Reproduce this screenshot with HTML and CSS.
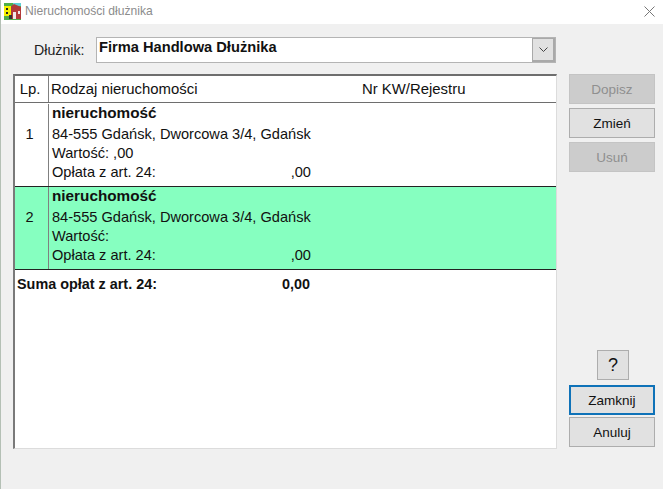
FILE: index.html
```html
<!DOCTYPE html>
<html lang="pl">
<head>
    <meta charset="UTF-8">
    <title>Nieruchomości dłużnika</title>
    <link rel="stylesheet" href="styles.css">
</head>
<body>

    <div class="window">
        <div class="title-bar">
            <svg class="app-icon" width="17" height="17" viewBox="0 0 17 17">
                <rect x="0" y="0" width="17" height="17" fill="#4fae4a"/>
                <rect x="9" y="0" width="8" height="3" fill="#5fd0d8"/>
                <path d="M5 5 L10 1 L17 4 L17 16 L5 16 Z" fill="#b23a3a"/>
                <rect x="9" y="9" width="3" height="7" fill="#f0e8e8"/>
                <rect x="14" y="8" width="2" height="3" fill="#f0e8e8"/>
                <rect x="0" y="3" width="7" height="10" fill="#f5f000"/>
                <rect x="2" y="5" width="2" height="2" fill="#222"/>
                <rect x="2" y="9" width="2" height="2" fill="#222"/>
                <rect x="5" y="12" width="3" height="4" fill="#333"/>
            </svg>
            <span class="title-text">Nieruchomości dłużnika</span>
            <svg class="close-icon" width="11" height="11" viewBox="0 0 11 11">
                <path d="M0.5 0.5 L10.5 10.5 M10.5 0.5 L0.5 10.5" stroke="#777" stroke-width="1" fill="none"/>
            </svg>
        </div>

        <div class="content">
            <div class="debtor-row">
                <label class="debtor-label">Dłużnik:</label>
                <div class="combo">
                    <span class="combo-value">Firma Handlowa Dłużnika</span>
                    <span class="combo-arrow">
                        <svg width="9" height="5" viewBox="0 0 9 5">
                            <path d="M0.5 0.5 L4.5 4.5 L8.5 0.5" stroke="#444" stroke-width="1" fill="none"/>
                        </svg>
                    </span>
                </div>
            </div>

            <div class="main-row">
                <div class="list">
                    <div class="list-head">
                        <div class="col-lp">Lp.</div>
                        <div class="col-kind">Rodzaj nieruchomości</div>
                        <div class="col-kw">Nr KW/Rejestru</div>
                    </div>

                    <div class="item item-first">
                        <div class="col-lp">1</div>
                        <div class="col-data">
                            <div class="line line-bold">nieruchomość</div>
                            <div class="line">84-555 Gdańsk, Dworcowa 3/4, Gdańsk</div>
                            <div class="line">Wartość: ,00</div>
                            <div class="line line-fee"><span>Opłata z art. 24:</span><span>,00</span></div>
                        </div>
                    </div>

                    <div class="item item-selected">
                        <div class="col-lp">2</div>
                        <div class="col-data">
                            <div class="line line-bold">nieruchomość</div>
                            <div class="line">84-555 Gdańsk, Dworcowa 3/4, Gdańsk</div>
                            <div class="line">Wartość:</div>
                            <div class="line line-fee"><span>Opłata z art. 24:</span><span>,00</span></div>
                        </div>
                    </div>

                    <div class="sum-row"><span>Suma opłat z art. 24:</span><span>0,00</span></div>
                </div>

                <div class="side">
                    <button class="btn" disabled>Dopisz</button>
                    <button class="btn">Zmień</button>
                    <button class="btn" disabled>Usuń</button>
                    <button class="btn btn-help">?</button>
                    <button class="btn btn-default">Zamknij</button>
                    <button class="btn">Anuluj</button>
                </div>
            </div>
        </div>
    </div>

</body>
</html>
```

FILE: styles.css
```css
* {
    margin: 0;
    padding: 0;
    box-sizing: border-box;
    font-family: "Liberation Sans", Arial, sans-serif;
}

body {
    background-color: #f0f0f0;
    height: 489px;
    overflow: hidden;
    color: #111;
}

.window {
    height: 489px;
    border-left: 1px solid #b4c0b5;
    display: flex;
    flex-direction: column;
}

.title-bar {
    height: 24px;
    background: white;
    display: flex;
    align-items: center;
    padding: 0 8px 2px 3px;
}

.app-icon {
    margin-right: 4px;
}

.title-text {
    font-size: 12.1px;
    color: #8c8c8c;
    flex: 1;
}

.content {
    flex: 1;
    padding: 13px 8px 0 12px;
}

.debtor-row {
    display: flex;
    align-items: center;
    height: 26px;
}

.debtor-label {
    font-size: 14.2px;
    color: #222;
    width: 83px;
    padding-left: 21px;
}

.combo {
    width: 460px;
    height: 26px;
    flex: none;
    background: white;
    border: 1px solid #b4b4b4;
    display: flex;
    align-items: stretch;
}

.combo-value {
    flex: 1;
    font-size: 14.67px;
    font-weight: bold;
    padding: 1px 0 0 2px;
}

.combo-arrow {
    width: 23px;
    background: #e1e1e1;
    border: 1px solid #a9a9a9;
    border-width: 1px 2px 2px 1px;
    display: flex;
    align-items: center;
    justify-content: center;
}

.main-row {
    display: flex;
    margin-top: 11px;
    height: 375px;
}

.list {
    width: 544px;
    flex: none;
    background: white;
    border-top: 2px solid #6e6e6e;
    border-left: 2px solid #7a7a7a;
    border-right: 1px solid #dcdcdc;
    border-bottom: 1px solid #dcdcdc;
    font-size: 14.6px;
}

.list-head {
    display: flex;
    height: 27px;
    align-items: center;
    border-bottom: 1px solid #6e6e6e;
    font-size: 14.9px;
}

.list-head .col-lp {
    height: 100%;
    line-height: 26px;
    padding-right: 3px;
}

.col-lp {
    width: 34px;
    flex: none;
    text-align: center;
    border-right: 1px solid #808080;
}

.col-kind {
    width: 313px;
    padding-left: 2px;
    flex: none;
}

.col-kw {
    flex: 1;
}

.item {
    display: flex;
    height: 83px;
    border-bottom: 1px solid #222;
}

.item-first {
    height: 84px;
    padding-top: 1px;
}

.item .col-lp {
    padding: 21px 4px 0 0;
    line-height: 19px;
}

.item-selected {
    background: #86ffc0;
}

.col-data {
    width: 262px;
    padding-left: 3px;
}

.line {
    height: 19px;
    line-height: 19px;
    white-space: nowrap;
}

.line-bold {
    height: 21px;
    line-height: 18px;
    font-weight: bold;
    font-size: 15.3px;
}

.line-fee,
.sum-row {
    display: flex;
    justify-content: space-between;
}

.sum-row {
    width: 295px;
    padding: 6px 0 0 2px;
    font-weight: bold;
    font-size: 14.4px;
}

.side {
    width: 87px;
    margin-left: 12px;
    display: flex;
    flex-direction: column;
}

.btn {
    width: 86px;
    height: 30px;
    flex: none;
    margin-bottom: 4px;
    background: #e1e1e1;
    border: 1px solid #adadad;
    font-size: 13.5px;
    color: #111;
}

.btn:disabled {
    background: #cccccc;
    border-color: #c4c4c4;
    color: #8f8f8f;
}

.btn-help {
    width: 32px;
    margin: 174px 0 5px 28px;
    font-size: 18px;
}

.btn-default {
    border: 2px solid #0f72b8;
    margin-bottom: 2px;
}
```
